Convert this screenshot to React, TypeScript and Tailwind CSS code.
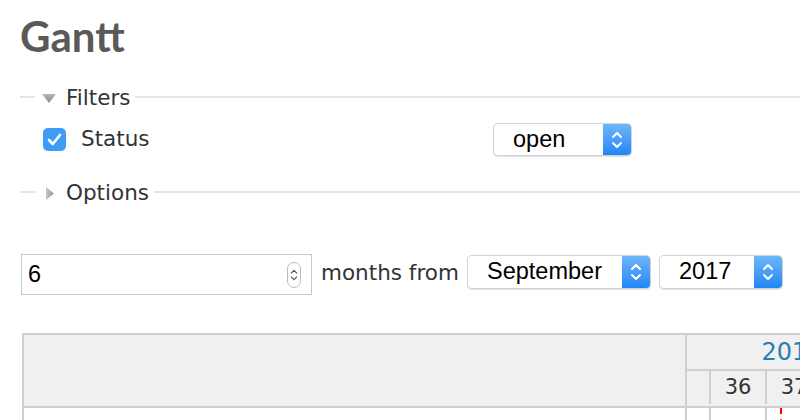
import React from 'react';

const Chevrons = ({ size = 'lg' }: { size?: 'lg' | 'sm' }) => {
    const w = size === 'lg' ? 12 : 8;
    return (
        <svg width={w} height={size === 'lg' ? 22 : 18} viewBox="0 0 12 22" fill="none" strokeLinecap="round" strokeLinejoin="round">
            <path d="M2 8 L6 4 L10 8" stroke="currentColor" strokeWidth={size === 'lg' ? 2 : 1.6} />
            <path d="M2 14 L6 18 L10 14" stroke="currentColor" strokeWidth={size === 'lg' ? 2 : 1.6} />
        </svg>
    );
};

const MacSelect = ({ value, width, height = 34 }: { value: string; width: number; height?: number }) => (
    <div
        className="flex items-stretch bg-white border border-[#d4d4d4] rounded-[5px] shadow-[0_1px_1px_rgba(0,0,0,0.12)] overflow-hidden"
        style={{ width, height }}
    >
        <div className="flex-1 flex items-center pl-[19px] text-[23.5px] text-black font-['Liberation_Sans',Arial,sans-serif]">
            {value}
        </div>
        <div className="w-[28px] flex items-center justify-center text-white bg-gradient-to-b from-[#6db6fb] to-[#1f86f5]">
            <Chevrons />
        </div>
    </div>
);

const Legend = ({ label, open }: { label: string; open: boolean }) => (
    <div className="flex items-start h-[26px]">
        <div className="w-[15px] h-[2px] mt-[11px] bg-[#e4e4e4]" />
        {open ? (
            <div className="ml-[7px] w-[14px] h-[26px] flex items-center">
                <svg width="14" height="9" viewBox="0 0 14 9" className="mt-[1px]">
                    <defs>
                        <linearGradient id="tdown" x1="0" y1="0" x2="0" y2="1">
                            <stop offset="0" stopColor="#b8b8b8" />
                            <stop offset="1" stopColor="#878787" />
                        </linearGradient>
                    </defs>
                    <path d="M0 0 H14 L7 9 Z" fill="url(#tdown)" />
                </svg>
            </div>
        ) : (
            <div className="ml-[11px] w-[8px] h-[26px] flex items-center">
                <svg width="8" height="13" viewBox="0 0 8 13" className="mt-[1px]">
                    <defs>
                        <linearGradient id="tright" x1="0" y1="0" x2="1" y2="0">
                            <stop offset="0" stopColor="#c8c8c8" />
                            <stop offset="1" stopColor="#959595" />
                        </linearGradient>
                    </defs>
                    <path d="M0 0 L8 6.5 L0 13 Z" fill="url(#tright)" />
                </svg>
            </div>
        )}
        <span className={`${open ? 'ml-[10px]' : 'ml-[12px]'} mr-[5px] text-[21.5px] leading-[26px] text-[#333]`}>{label}</span>
        <div className="flex-1 h-[2px] mt-[11px] bg-[#e4e4e4]" />
    </div>
);

const weeks = [36, 37, 38, 39, 40, 41, 42, 43, 44, 45];

export default function App() {
    return (
        <div className="w-[800px] h-[420px] overflow-hidden bg-white font-['DejaVu_Sans',Verdana,sans-serif] text-[#333]">
            <div className="w-[1300px] pl-[20px]">
                {/* Title */}
                <h2 className="mt-[12px] h-[48px] text-[42px] leading-[48px] font-bold text-[#595959] font-['Lato',sans-serif]">
                    Gantt
                </h2>

                {/* Filters */}
                <div className="mt-[25px]">
                    <Legend label="Filters" open />
                    <div className="mt-[12px] flex items-center h-[33px]">
                        <div className="ml-[23px] w-[23px] h-[23px] rounded-[5px] bg-[#3f9cf6] flex items-center justify-center">
                            <svg width="15" height="13" viewBox="0 0 15 13" fill="none">
                                <path d="M2 7 L5.8 11 L13 2" stroke="white" strokeWidth="2.6" strokeLinecap="round" strokeLinejoin="round" />
                            </svg>
                        </div>
                        <span className="ml-[15px] w-[412px] text-[21.5px]">Status</span>
                        <MacSelect value="open" width={139} height={33} />
                    </div>
                </div>

                {/* Options */}
                <div className="mt-[24px]">
                    <Legend label="Options" open={false} />
                </div>

                {/* Period */}
                <div className="mt-[48px] flex items-start">
                    <div className="ml-[1px] w-[291px] h-[41px] border border-[#c9c9c9] flex items-center pl-[6px] pr-[10px]">
                        <span className="flex-1 text-[23.5px] text-black font-['Liberation_Sans',Arial,sans-serif]">6</span>
                        <div className="w-[14px] h-[26px] rounded-full border border-[#bdbdbd] flex items-center justify-center text-[#555]">
                            <Chevrons size="sm" />
                        </div>
                    </div>
                    <span className="ml-[9px] mt-[6px] w-[146px] text-[21.5px] leading-[26px]">months from</span>
                    <div className="mt-[1px]">
                        <MacSelect value="September" width={184} />
                    </div>
                    <div className="ml-[8px] mt-[1px]">
                        <MacSelect value="2017" width={124} />
                    </div>
                </div>

                {/* Gantt table */}
                <div className="mt-[38px] ml-[2px] border-l-2 border-t-2 border-[#cfcfcf]">
                    <div className="flex border-b-2 border-[#cfcfcf]">
                        <div className="w-[663px] h-[71px] bg-[#f0f0f0] border-r-2 border-[#cfcfcf]" />
                        <div className="flex-1 bg-[#f0f0f0]">
                            <div className="h-[36px] border-b-2 border-[#cfcfcf] flex">
                                <div className="w-[210px] flex items-center justify-center text-[24px] text-[#2a7db5]">2017</div>
                            </div>
                            <div className="h-[33px] flex">
                                <div className="w-[24px] border-r-2 border-[#cfcfcf]" />
                                {weeks.map((w) => (
                                    <div key={w} className="w-[56px] shrink-0 border-r-2 border-[#cfcfcf] flex items-center justify-center text-[21px] text-[#333]">
                                        {w}
                                    </div>
                                ))}
                            </div>
                        </div>
                    </div>
                    <div className="flex h-[40px]">
                        <div className="w-[663px] border-r-2 border-[#cfcfcf]" />
                        <div className="w-[24px] border-r-2 border-[#cfcfcf]" />
                        <div className="w-[56px] shrink-0 border-r-2 border-[#cfcfcf]" />
                        <div className="w-[56px] shrink-0 border-r-2 border-[#cfcfcf] pl-[13px]">
                            <div className="w-0 h-full border-l-2 border-dashed border-[#ff0000]" />
                        </div>
                    </div>
                </div>
            </div>
        </div>
    );
}
